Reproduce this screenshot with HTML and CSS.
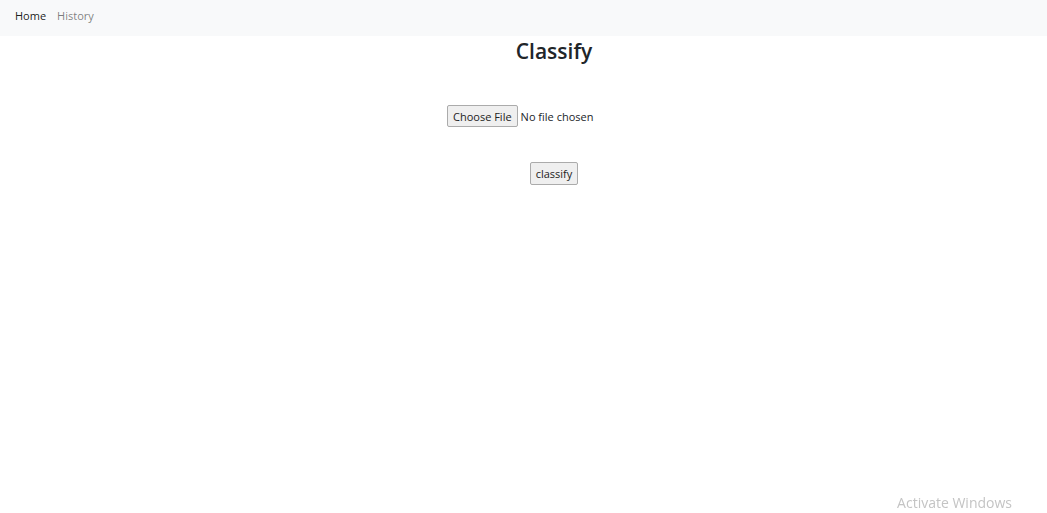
FILE: index.html
```html
<!DOCTYPE html>
<html>
<head>
<meta charset="utf-8">
<title>Classify</title>
<link rel="stylesheet" href="styles.css">
</head>
<body>
<nav class="navbar">
  <a class="nav-link active" href="#">Home</a>
  <a class="nav-link" href="#">History</a>
</nav>
<main class="main">
  <h2 class="title">Classify</h2>
  <form class="form">
    <div class="file-row">
      <span class="btn">Choose File</span>
      <span class="file-text">No file chosen</span>
    </div>
    <div class="submit-row">
      <span class="btn btn-submit">classify</span>
    </div>
  </form>
</main>
<div class="watermark">Activate Windows</div>
</body>
</html>
```

FILE: styles.css
```css
* { box-sizing: border-box; }
html, body { margin: 0; padding: 0; background: #fff; }
body {
  font-family: "Open Sans", "Noto Sans", sans-serif;
  color: #212529;
  font-size: 12px;
}
.navbar {
  height: 36px;
  background: #f8f9fa;
  display: flex;
  align-items: center;
  padding-left: 15px;
  padding-bottom: 5px;
  gap: 11px;
}
.nav-link {
  text-decoration: none;
  color: rgba(0,0,0,.5);
  font-size: 11px;
}
.nav-link.active { color: rgba(0,0,0,.9); }
.main {
  display: flex;
  flex-direction: column;
  align-items: center;
  padding-left: 61px;
}
.title {
  font-size: 21px;
  font-weight: 600;
  margin: 0;
  line-height: 30px;
}
.form {
  display: flex;
  flex-direction: column;
  align-items: center;
}
.file-row {
  width: 214px;
  display: flex;
  align-items: center;
  margin-top: 39px;
  gap: 3px;
}
.btn {
  display: inline-flex;
  align-items: center;
  justify-content: center;
  background: #efefef;
  border: 1px solid #ababab;
  border-radius: 2px;
  height: 22px;
  padding: 0 5px;
  font-size: 11px;
  color: #222;
}
.file-text { font-size: 11px; color: #212529; }
.submit-row { margin-top: 35px; }
.btn-submit { height: 23px; }
.watermark {
  position: fixed;
  right: 35px;
  bottom: 1px;
  font-size: 14px;
  color: #c4c4c4;
}
```
